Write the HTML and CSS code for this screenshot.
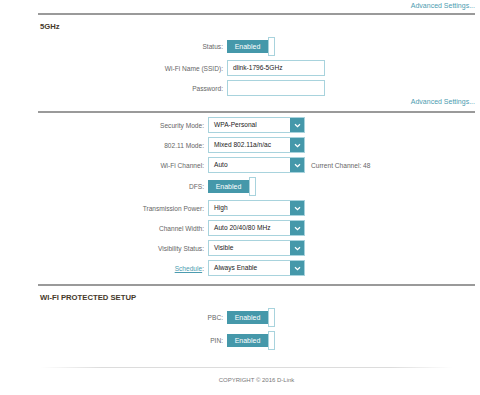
FILE: index.html
```html
<!DOCTYPE html>
<html lang="en">
<head>
<meta charset="UTF-8">
<meta name="viewport" content="width=device-width, initial-scale=1.0">
<title>Wi-Fi 5GHz</title>
<link rel="stylesheet" href="styles.css">
</head>
<body>
<div class="page">
    <div class="adv-row"><a class="adv-link" href="#">Advanced Settings...</a></div>
    <div class="rule"></div>

    <div class="section">
        <div class="section-title">5GHz</div>
        <div class="form form-basic">
            <div class="row">
                <label class="label">Status:</label>
                <div class="toggle"><span class="toggle-on">Enabled</span><span class="toggle-knob"></span></div>
            </div>
            <div class="row">
                <label class="label">Wi-Fi Name (SSID):</label>
                <div class="text-input">dlink-1796-5GHz</div>
            </div>
            <div class="row">
                <label class="label">Password:</label>
                <div class="text-input"></div>
            </div>
        </div>
        <div class="adv-row adv-lower"><a class="adv-link" href="#">Advanced Settings...</a></div>
    </div>
    <div class="rule"></div>

    <div class="section">
        <div class="form form-advanced">
            <div class="row">
                <label class="label">Security Mode:</label>
                <div class="select"><span class="select-value">WPA-Personal</span><span class="select-arrow"><svg width="7" height="5" viewBox="0 0 7 5"><path d="M1 1.2 L3.5 3.6 L6 1.2" fill="none" stroke="#fff" stroke-width="1.3"/></svg></span></div>
            </div>
            <div class="row">
                <label class="label">802.11 Mode:</label>
                <div class="select"><span class="select-value">Mixed 802.11a/n/ac</span><span class="select-arrow"><svg width="7" height="5" viewBox="0 0 7 5"><path d="M1 1.2 L3.5 3.6 L6 1.2" fill="none" stroke="#fff" stroke-width="1.3"/></svg></span></div>
            </div>
            <div class="row">
                <label class="label">Wi-Fi Channel:</label>
                <div class="select"><span class="select-value">Auto</span><span class="select-arrow"><svg width="7" height="5" viewBox="0 0 7 5"><path d="M1 1.2 L3.5 3.6 L6 1.2" fill="none" stroke="#fff" stroke-width="1.3"/></svg></span></div>
                <span class="note">Current Channel: 48</span>
            </div>
            <div class="row">
                <label class="label">DFS:</label>
                <div class="toggle"><span class="toggle-on">Enabled</span><span class="toggle-knob"></span></div>
            </div>
            <div class="row">
                <label class="label">Transmission Power:</label>
                <div class="select"><span class="select-value">High</span><span class="select-arrow"><svg width="7" height="5" viewBox="0 0 7 5"><path d="M1 1.2 L3.5 3.6 L6 1.2" fill="none" stroke="#fff" stroke-width="1.3"/></svg></span></div>
            </div>
            <div class="row">
                <label class="label">Channel Width:</label>
                <div class="select"><span class="select-value">Auto 20/40/80 MHz</span><span class="select-arrow"><svg width="7" height="5" viewBox="0 0 7 5"><path d="M1 1.2 L3.5 3.6 L6 1.2" fill="none" stroke="#fff" stroke-width="1.3"/></svg></span></div>
            </div>
            <div class="row">
                <label class="label">Visibility Status:</label>
                <div class="select"><span class="select-value">Visible</span><span class="select-arrow"><svg width="7" height="5" viewBox="0 0 7 5"><path d="M1 1.2 L3.5 3.6 L6 1.2" fill="none" stroke="#fff" stroke-width="1.3"/></svg></span></div>
            </div>
            <div class="row">
                <label class="label"><a class="label-link" href="#">Schedule</a>:</label>
                <div class="select"><span class="select-value">Always Enable</span><span class="select-arrow"><svg width="7" height="5" viewBox="0 0 7 5"><path d="M1 1.2 L3.5 3.6 L6 1.2" fill="none" stroke="#fff" stroke-width="1.3"/></svg></span></div>
            </div>
        </div>
    </div>
    <div class="rule rule-bottom"></div>

    <div class="section">
        <div class="section-title">WI-FI PROTECTED SETUP</div>
        <div class="form form-wps">
            <div class="row">
                <label class="label">PBC:</label>
                <div class="toggle"><span class="toggle-on">Enabled</span><span class="toggle-knob"></span></div>
            </div>
            <div class="row">
                <label class="label">PIN:</label>
                <div class="toggle"><span class="toggle-on">Enabled</span><span class="toggle-knob"></span></div>
            </div>
        </div>
    </div>

    <div class="footer">
        <div class="footer-line"></div>
        <div class="copyright">COPYRIGHT &copy; 2016 D-Link</div>
    </div>
</div>
</body>
</html>
```

FILE: styles.css
```css
body {
    margin: 0;
    background-color: #fff;
    font-family: "Liberation Sans", Arial, sans-serif;
    font-size: 6.6px;
    color: #666;
}

.page {
    width: 437px;
    margin-left: 38px;
}

.adv-row {
    height: 11px;
    line-height: 11px;
    text-align: right;
}

.adv-link {
    color: #4c9cb0;
    font-size: 7px;
    text-decoration: none;
}

.adv-lower {
    margin-top: 1px;
    height: 12px;
    line-height: 10px;
}

.rule {
    height: 2px;
    background-color: #9a9a9a;
    margin-top: 2px;
}

.rule-bottom {
    margin-top: 8px;
}

.section-title {
    font-size: 7.7px;
    font-weight: bold;
    color: #46392b;
    padding-left: 2px;
    height: 21px;
    line-height: 21px;
    margin-top: 1px;
}

.form {
    display: flex;
    flex-direction: column;
    gap: 4px;
}

.form-advanced {
    margin-top: 4px;
}

.row {
    display: flex;
    align-items: center;
    min-height: 16px;
}

.label {
    width: 185px;
    margin-right: 4px;
    text-align: right;
}

.form-advanced .label {
    width: 166px;
}

.label-link {
    color: #4c9cb0;
}

.toggle {
    display: flex;
    align-items: center;
    height: 19px;
}

.toggle-on {
    width: 41px;
    height: 13px;
    line-height: 13px;
    background-color: #4598aa;
    color: #fff;
    font-size: 7px;
    text-align: center;
}

.toggle-knob {
    width: 5px;
    height: 17px;
    border: 1px solid #a8d3dd;
    background-color: #fff;
}

.text-input {
    box-sizing: border-box;
    width: 98px;
    height: 16px;
    line-height: 14px;
    border: 1px solid #a8d3dd;
    padding-left: 5px;
    color: #222;
}

.select {
    box-sizing: border-box;
    display: flex;
    width: 97px;
    height: 16px;
    border: 1px solid #a8d3dd;
}

.select-value {
    flex: 1;
    padding-left: 5px;
    line-height: 14px;
    color: #222;
}

.select-arrow {
    width: 14px;
    background-color: #4598aa;
    display: flex;
    align-items: center;
    justify-content: center;
}

.note {
    margin-left: 6px;
}

.footer {
    margin-top: 17px;
}

.footer-line {
    height: 1px;
    margin: 0 22px 0 2px;
    background: linear-gradient(to right, rgba(220, 220, 220, 0), #dcdcdc 15%, #dcdcdc 85%, rgba(220, 220, 220, 0));
}

.copyright {
    margin-top: 9px;
    text-align: center;
    font-size: 6px;
    color: #777;
}
```
